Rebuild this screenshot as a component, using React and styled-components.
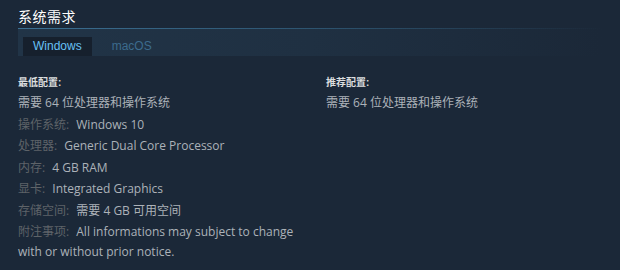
import {createGlobalStyle, styled} from 'styled-components';

const GlobalStyle = createGlobalStyle`
  html, body {
    margin: 0;
    padding: 0;
    background: #1b2838;
  }
  body {
    font-family: "Liberation Sans", Arial, "Noto Sans CJK SC", sans-serif;
  }
`

const Page = styled.div`
  width: 620px;
  height: 270px;
  box-sizing: border-box;
  padding: 8px 18px 0 18px;
  background: #1b2838;
  overflow: hidden;
`

const Title = styled.h2`
  margin: 0;
  font-size: 14px;
  font-weight: normal;
  line-height: 19px;
  color: #ffffff;
  letter-spacing: 0.5px;
  padding-bottom: 1px;
`

const TabBar = styled.div`
  display: flex;
  align-items: flex-end;
  gap: 10px;
  height: 27px;
  padding-left: 5px;
  border-top: 1px solid transparent;
  border-image: linear-gradient(90deg, #3b6f92 0%, #2d5470 50%, rgba(27, 40, 56, 0) 100%) 1;
  background: linear-gradient(90deg, #213447 0%, #1f3042 50%, #1b2838 100%);
`

const Tab = styled.div`
  height: 19px;
  line-height: 19px;
  padding: 0 10px;
  font-size: 12px;
  color: ${({$active}) => ($active ? '#67c1f5' : '#3c6b8d')};
  background: ${({$active}) => ($active ? '#16202d' : 'transparent')};
`

const Columns = styled.div`
  display: grid;
  grid-template-columns: 286px 1fr;
  column-gap: 22px;
  padding-top: 20px;
`

const Heading = styled.div`
  font-size: 10px;
  font-weight: bold;
  line-height: 14px;
  color: #dcdedf;
  margin-bottom: 3px;
`

const Line = styled.div`
  font-family: "Open Sans", "Noto Sans CJK SC", sans-serif;
  font-size: 12px;
  line-height: 20px;
  color: #acb2b8;
  & + & {
    margin-top: 1.5px;
  }
`

const Label = styled.span`
  color: #5e6368;
  margin-right: 4px;
`

const minimum = [
  ['操作系统:', 'Windows 10'],
  ['处理器:', 'Generic Dual Core Processor'],
  ['内存:', '4 GB RAM'],
  ['显卡:', 'Integrated Graphics'],
  ['存储空间:', '需要 4 GB 可用空间'],
  ['附注事项:', 'All informations may subject to change with or without prior notice.'],
]

export default function App() {
  return (
    <>
      <GlobalStyle />
      <Page>
        <Title>系统需求</Title>
        <TabBar>
          <Tab $active>Windows</Tab>
          <Tab>macOS</Tab>
        </TabBar>
        <Columns>
          <div>
            <Heading>最低配置:</Heading>
            <Line>需要 64 位处理器和操作系统</Line>
            {minimum.map(([label, value]) => (
              <Line key={label}>
                <Label>{label}</Label> {value}
              </Line>
            ))}
          </div>
          <div>
            <Heading>推荐配置:</Heading>
            <Line>需要 64 位处理器和操作系统</Line>
          </div>
        </Columns>
      </Page>
    </>
  )
}
